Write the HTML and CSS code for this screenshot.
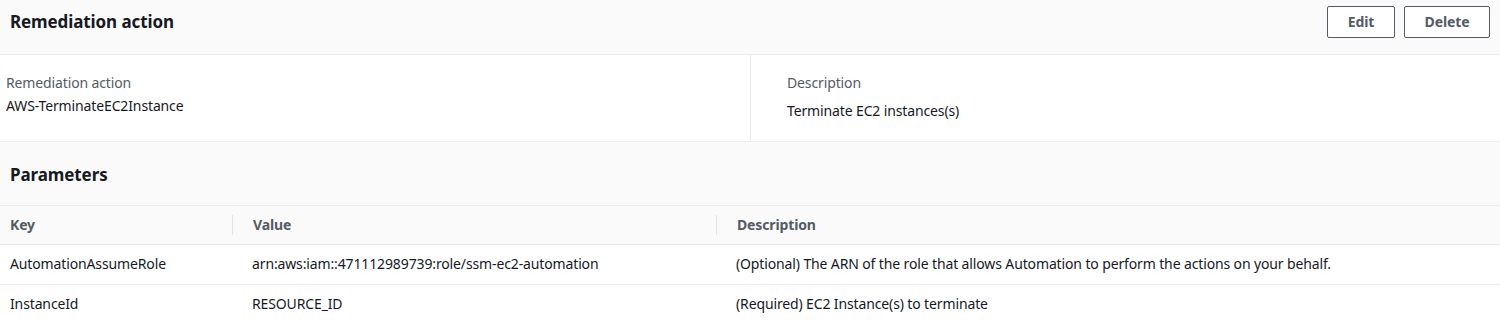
FILE: index.html
```html
<!DOCTYPE html>
<html>
<head>
<meta charset="utf-8">
<link rel="stylesheet" href="styles.css">
</head>
<body>
<div class="panel">
  <div class="panel-header">
    <h2 class="title">Remediation action</h2>
    <div class="actions">
      <button class="btn btn-edit">Edit</button>
      <button class="btn btn-delete">Delete</button>
    </div>
  </div>
  <div class="details">
    <div class="col col-left">
      <div class="label">Remediation action</div>
      <div class="value">AWS-TerminateEC2Instance</div>
    </div>
    <div class="col col-right">
      <div class="label">Description</div>
      <div class="value value-desc">Terminate EC2 instances(s)</div>
    </div>
  </div>
  <div class="section-header">
    <h2 class="title">Parameters</h2>
  </div>
  <table class="params">
    <colgroup>
      <col class="c-key">
      <col class="c-value">
      <col class="c-desc">
    </colgroup>
    <thead>
      <tr>
        <th class="first">Key</th>
        <th class="div">Value</th>
        <th class="div">Description</th>
      </tr>
    </thead>
    <tbody>
      <tr>
        <td class="first">AutomationAssumeRole</td>
        <td>arn:aws:iam::471112989739:role/ssm-ec2-automation</td>
        <td>(Optional) The ARN of the role that allows Automation to perform the actions on your behalf.</td>
      </tr>
      <tr>
        <td class="first">InstanceId</td>
        <td>RESOURCE_ID</td>
        <td>(Required) EC2 Instance(s) to terminate</td>
      </tr>
    </tbody>
  </table>
</div>
</body>
</html>
```

FILE: styles.css
```css
* { box-sizing: border-box; }
html, body {
  margin: 0;
  padding: 0;
  background: #ffffff;
}
body {
  font-family: "Noto Sans", "Open Sans", sans-serif;
  font-size: 14px;
  letter-spacing: -0.13px;
  color: #16191f;
}
.panel { width: 1500px; }
.panel-header {
  display: flex;
  justify-content: space-between;
  align-items: flex-start;
  height: 55px;
  padding: 6px 10px 0 10px;
  background: #fafafa;
  border-bottom: 1px solid #eaeded;
}
.title {
  margin: 0;
  font-size: 17px;
  font-weight: 700;
  line-height: 31px;
  color: #16191f;
  letter-spacing: -0.1px;
}
.actions {
  display: flex;
  gap: 9px;
}
.btn {
  font-family: inherit;
  font-size: 14px;
  font-weight: 700;
  letter-spacing: -0.13px;
  color: #545b64;
  background: #ffffff;
  border: 1px solid #545b64;
  border-radius: 2px;
  height: 32px;
  padding: 0;
  line-height: 30px;
}
.btn-edit { width: 68px; }
.btn-delete { width: 86px; }
.details {
  display: flex;
  height: 87px;
  border-bottom: 1px solid #eaeded;
}
.col {
  padding-top: 18px;
}
.col-left {
  width: 751px;
  padding-left: 6px;
  border-right: 1px solid #eaeded;
}
.col-right {
  flex: 1;
  padding-left: 36px;
}
.label {
  color: #545b64;
  line-height: 20px;
}
.value {
  margin-top: 3px;
  line-height: 20px;
}
.value-desc { margin-top: 8px; }
.section-header {
  height: 64px;
  padding: 17px 10px 0 10px;
  background: #fafafa;
  border-bottom: 1px solid #eaeded;
}
.params {
  width: 1500px;
  border-collapse: collapse;
  table-layout: fixed;
}
.c-key { width: 232px; }
.c-value { width: 484px; }
.params th {
  height: 38px;
  text-align: left;
  font-weight: 700;
  color: #545b64;
  background: #fafafa;
  border-bottom: 1px solid #eaeded;
  padding: 0 0 0 21px;
  line-height: 20px;
}
.params th.div {
  background: #fafafa linear-gradient(#e2e5e5, #e2e5e5) no-repeat 0 center / 1px 20px;
}
.params td {
  height: 40px;
  padding: 0 0 0 20px;
  line-height: 20px;
  border-bottom: 1px solid #eaeded;
  white-space: nowrap;
}
.params tbody tr:last-child td { border-bottom: none; }
.params .first { padding-left: 10px; }
```
